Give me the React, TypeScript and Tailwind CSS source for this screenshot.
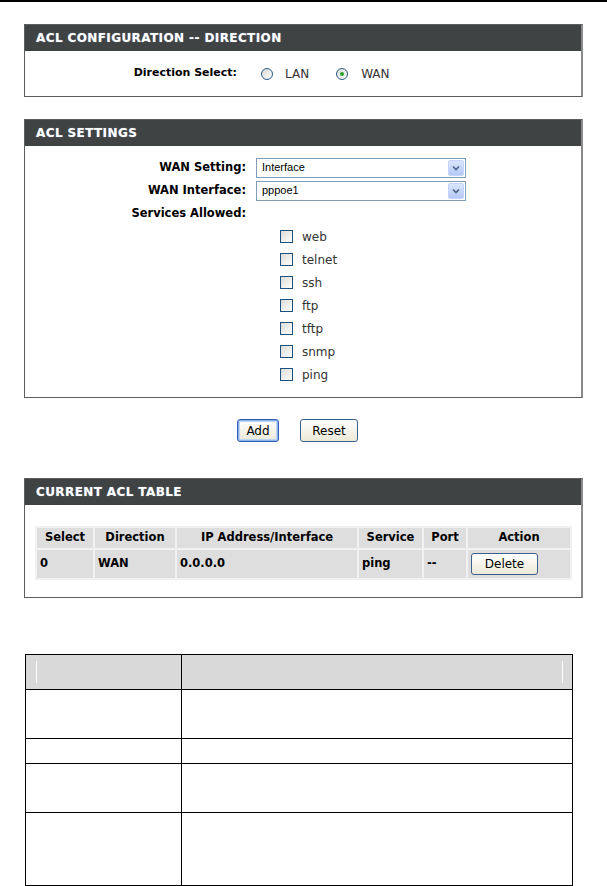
import React from "react";

const font = "font-['DejaVu_Sans',_'Liberation_Sans',_sans-serif]";

function PanelHeader({ title }: { title: string }) {
  return (
    <div className="h-[26px] bg-[#404343] flex items-center pl-[11px]">
      <span className="text-white font-bold text-[12px] tracking-[0.4px] [text-shadow:0_0_1px_#8aa0b8]">
        {title}
      </span>
    </div>
  );
}

function Radio({ checked }: { checked?: boolean }) {
  return (
    <span className="w-[12px] h-[12px] rounded-full border border-[#2a5b8a] bg-gradient-to-br from-[#d8d8d4] to-white flex items-center justify-center">
      {checked && <span className="w-[4px] h-[4px] rounded-full bg-[#2aa12a]" />}
    </span>
  );
}

function Checkbox() {
  return (
    <span className="w-[13px] h-[13px] border border-[#1c5180] bg-gradient-to-br from-[#dcdcd7] to-white block" />
  );
}

function Select({ value }: { value: string }) {
  return (
    <div className="w-[210px] h-[20px] border border-[#7f9db9] bg-white flex items-center">
      <span className="flex-1 pl-[5px] text-[11px] text-black font-['Liberation_Sans',_sans-serif]">{value}</span>
      <span className="w-[16px] h-[16px] mr-[1px] rounded-[2px] bg-gradient-to-b from-[#dbe6fd] to-[#b4c8f6] border border-[#c3d3fd] flex items-center justify-center">
        <svg width="8" height="6" viewBox="0 0 8 6">
          <path d="M1 1.5 L4 4.5 L7 1.5" fill="none" stroke="#4d6185" strokeWidth="1.6" />
        </svg>
      </span>
    </div>
  );
}

function XpButton({ label, w, focus }: { label: string; w: string; focus?: boolean }) {
  return (
    <div
      className={`${w} h-[23px] rounded-[3px] border ${
        focus ? "border-[#2f5fb0] shadow-[inset_0_0_0_1px_#8eb1eb,inset_0_0_0_2px_#bcd4f6]" : "border-[#3d5f8c]"
      } bg-gradient-to-b from-white to-[#ece9d8] flex items-center justify-center text-[12px] text-black`}
    >
      {label}
    </div>
  );
}

export default function App() {
  const services = ["web", "telnet", "ssh", "ftp", "tftp", "snmp", "ping"];
  return (
    <div className={`w-[607px] h-[886px] bg-white ${font} text-black overflow-hidden`}>
      <div className="h-[2px] bg-black" />

      {/* Panel 1 */}
      <div className="ml-[24px] mt-[22px] w-[559px] border border-[#5e5e5e] border-r-2 border-r-[#8a8a8a]">
        <PanelHeader title="ACL CONFIGURATION -- DIRECTION" />
        <div className="h-[45px] flex items-center">
          <div className="w-[212px] text-right font-bold text-[11px]">Direction Select:</div>
          <div className="ml-[24px] flex items-center">
            <Radio />
            <span className="ml-[12px] text-[12px] text-[#333]">LAN</span>
            <span className="ml-[27px]"><Radio checked /></span>
            <span className="ml-[13px] text-[12px] text-[#333]">WAN</span>
          </div>
        </div>
      </div>

      {/* Panel 2 */}
      <div className="ml-[24px] mt-[22px] w-[559px] border border-[#5e5e5e] border-r-2 border-r-[#8a8a8a]">
        <PanelHeader title="ACL SETTINGS" />
        <div className="h-[251px] pt-[10px]">
          <div className="h-[23px] flex items-center">
            <div className="w-[221px] text-right font-bold text-[11.5px]">WAN Setting:</div>
            <div className="ml-[10px]"><Select value="Interface" /></div>
          </div>
          <div className="h-[23px] flex items-center">
            <div className="w-[221px] text-right font-bold text-[11.5px]">WAN Interface:</div>
            <div className="ml-[10px]"><Select value="pppoe1" /></div>
          </div>
          <div className="h-[23px] flex items-center">
            <div className="w-[221px] text-right font-bold text-[11.5px]">Services Allowed:</div>
          </div>
          {services.map((s) => (
            <div key={s} className="h-[23px] flex items-center pl-[255px]">
              <Checkbox />
              <span className="ml-[9px] text-[12px] text-[#333]">{s}</span>
            </div>
          ))}
        </div>
      </div>

      {/* Buttons */}
      <div className="mt-[21px] flex pl-[237px] gap-[21px]">
        <XpButton label="Add" w="w-[42px]" focus />
        <XpButton label="Reset" w="w-[58px]" />
      </div>

      {/* Panel 3 */}
      <div className="ml-[24px] mt-[36px] w-[559px] border border-[#5e5e5e] border-r-2 border-r-[#8a8a8a]">
        <PanelHeader title="CURRENT ACL TABLE" />
        <div className="pt-[21px] pb-[17px] px-[10px]">
          <table className="w-[537px] border-separate border-spacing-[2px] bg-[#f1f1f1] text-[11.5px]">
            <thead>
              <tr className="h-[20px] font-bold">
                <td className="w-[56px] bg-[#dedede] text-center">Select</td>
                <td className="w-[80px] bg-[#dedede] text-center">Direction</td>
                <td className="w-[180px] bg-[#dedede] text-center">IP Address/Interface</td>
                <td className="w-[63px] bg-[#dedede] text-center">Service</td>
                <td className="w-[42px] bg-[#dedede] text-center">Port</td>
                <td className="w-[102px] bg-[#dedede] text-center">Action</td>
              </tr>
            </thead>
            <tbody>
              <tr className="h-[28px] font-bold">
                <td className="bg-[#dedede] pl-[3px]">0</td>
                <td className="bg-[#dedede] pl-[3px]">WAN</td>
                <td className="bg-[#dedede] pl-[3px]">0.0.0.0</td>
                <td className="bg-[#dedede] pl-[3px]">ping</td>
                <td className="bg-[#dedede] pl-[3px]">--</td>
                <td className="bg-[#dedede] pl-[3px]">
                  <div className="w-[67px] h-[22px] rounded-[3px] border border-[#3d5f8c] bg-gradient-to-b from-white to-[#ece9d8] flex items-center justify-center text-[12px] font-normal">
                    Delete
                  </div>
                </td>
              </tr>
            </tbody>
          </table>
        </div>
      </div>

      {/* Document table */}
      <div className="ml-[25px] mt-[56px] w-[548px] border border-black">
        <div className="h-[35px] bg-[#d9d9d9] flex border-b border-black">
          <div className="w-[156px] border-r border-black relative">
            <span className="absolute left-[10px] top-[6px] w-px h-[22px] bg-white" />
          </div>
          <div className="flex-1 relative">
            <span className="absolute right-[9px] top-[6px] w-px h-[22px] bg-white" />
          </div>
        </div>
        {[49, 25, 49, 72].map((h, i) => (
          <div key={i} className={`flex ${i < 3 ? "border-b border-black" : ""}`} style={{ height: h }}>
            <div className="w-[156px] border-r border-black" />
            <div className="flex-1" />
          </div>
        ))}
      </div>
    </div>
  );
}
